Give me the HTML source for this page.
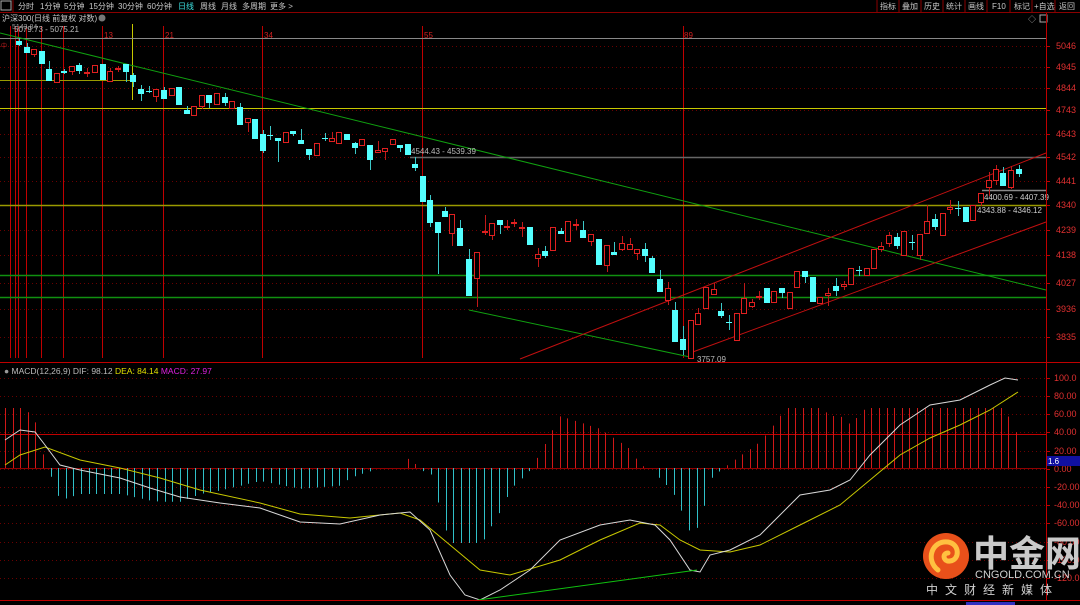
<!DOCTYPE html>
<html><head><meta charset="utf-8">
<style>
html,body{margin:0;padding:0;background:#000;width:1080px;height:605px;overflow:hidden}
svg{display:block}
text{font-family:"Liberation Sans","Noto Sans CJK SC",sans-serif}
</style></head>
<body>
<svg id="s" width="1080" height="605" xmlns="http://www.w3.org/2000/svg">
<rect width="1080" height="605" fill="#000"/>
<!-- toolbar -->
<g font-size="8" fill="#c8c8c8">
<rect x="1" y="1" width="10" height="9" fill="none" stroke="#aaa" stroke-width="1"/>
<line x1="13" y1="0" x2="13" y2="12" stroke="#8b0000"/>
<text x="18" y="9">分时</text><text x="40" y="9">1分钟</text><text x="64" y="9">5分钟</text>
<text x="89" y="9">15分钟</text><text x="118" y="9">30分钟</text><text x="147" y="9">60分钟</text>
<text x="178" y="9" fill="#3ce0e0">日线</text><text x="200" y="9">周线</text><text x="221" y="9">月线</text>
<text x="242" y="9">多周期</text><text x="270" y="9">更多 &gt;</text>
<text x="880" y="9">指标</text><text x="902" y="9">叠加</text><text x="924" y="9">历史</text>
<text x="946" y="9">统计</text><text x="968" y="9">画线</text><text x="992" y="9">F10</text>
<text x="1014" y="9">标记</text><text x="1034" y="9">+自选</text><text x="1059" y="9">返回</text>
</g>
<g stroke="#8b0000" stroke-width="1">
<line x1="0" y1="12.5" x2="1080" y2="12.5"/>
<line x1="877" y1="0" x2="877" y2="12"/><line x1="899" y1="0" x2="899" y2="12"/><line x1="921" y1="0" x2="921" y2="12"/>
<line x1="943" y1="0" x2="943" y2="12"/><line x1="965" y1="0" x2="965" y2="12"/><line x1="987" y1="0" x2="987" y2="12"/>
<line x1="1010" y1="0" x2="1010" y2="12"/><line x1="1032" y1="0" x2="1032" y2="12"/><line x1="1055" y1="0" x2="1055" y2="12"/>
</g>
<text x="2" y="21" font-size="8" fill="#c8c8c8">沪深300(日线 前复权 对数)</text>
<circle cx="102" cy="18" r="3.5" fill="#777"/>
<text x="1028" y="22" font-size="8" fill="#aaa">◇</text>
<rect x="1040" y="15" width="7" height="7" fill="none" stroke="#aaa"/>
<g id="grid"></g>
<g id="lines"></g>
<g id="cand"></g>
<g id="macd"></g>
<!-- right axis -->
<line x1="1046.5" y1="13" x2="1046.5" y2="601" stroke="#c00000"/>
<line x1="0" y1="362.5" x2="1080" y2="362.5" stroke="#c00000"/>
<line x1="0" y1="600.5" x2="1080" y2="600.5" stroke="#c00000"/>
<g font-size="9" fill="#e03030" id="axis"></g>
<text x="4" y="374" font-size="8.5" fill="#bbb"><tspan fill="#999">●</tspan> MACD(12,26,9)  DIF: 98.12 <tspan fill="#e0e000">DEA: 84.14</tspan> <tspan fill="#e020e0">MACD: 27.97</tspan></text>
<rect x="1047" y="456" width="33" height="10" fill="#1010a0"/>
<text x="1048" y="464" font-size="8" fill="#fff">1.6</text>
<rect x="966" y="602" width="49" height="3" fill="#3030c0"/>
<!-- logo -->
<circle cx="946" cy="556" r="23" fill="#e8501a"/>
<path d="M938 570 C925 560 932 540 948 542 C960 544 960 560 950 561 C943 562 942 553 948 553" fill="none" stroke="#ffc040" stroke-width="5" stroke-linecap="round"/>
<text x="973" y="566" font-size="36" font-weight="bold" fill="#c9c9c9" font-family="'Noto Sans CJK SC',sans-serif">中金网</text>
<text x="975" y="578" font-size="11" fill="#d0d0d0">CNGOLD.COM.CN</text>
<text x="926" y="594" font-size="12" fill="#d0d0d0" letter-spacing="7" font-family="'Noto Sans CJK SC',sans-serif">中文财经新媒体</text>
</svg>
<script>
var NS="http://www.w3.org/2000/svg";
function el(p,t,a){var e=document.createElementNS(NS,t);for(var k in a)e.setAttribute(k,a[k]);document.getElementById(p).appendChild(e);return e;}
function ln(p,x1,y1,x2,y2,c,extra){var a={x1:x1,y1:y1,x2:x2,y2:y2,stroke:c,"stroke-width":1};for(var k in extra)a[k]=extra[k];return el(p,"line",a);}
function tx(p,x,y,s,c,fs){var e=el(p,"text",{x:x,y:y,fill:c,"font-size":fs||9});e.textContent=s;}
var py=[[46,"5046"],[67,"4945"],[88,"4844"],[110,"4743"],[134,"4643"],[157,"4542"],[181,"4441"],[205,"4340"],[230,"4239"],[255,"4138"],[283,"4027"],[309,"3936"],[337,"3835"]];
py.forEach(function(p){ln("grid",0,p[0]+.5,1046,p[0]+.5,"#6a0000",{"stroke-dasharray":"1,3"});ln("grid",1046,p[0]+.5,1050,p[0]+.5,"#c00000");tx("axis",1056,p[0]+3,p[1],"#e03030");});
var my=[[378,"100.0"],[396,"80.00"],[414,"60.00"],[432,"40.00"],[451,"20.00"],[469,"0.00"],[487,"-20.00"],[505,"-40.00"],[523,"-60.00"],[542,"-80.00"],[560,"-100.0"],[578,"-120.0"]];
my.forEach(function(p){ln("grid",0,p[0]+.5,1046,p[0]+.5,"#6a0000",{"stroke-dasharray":"1,3"});ln("grid",1046,p[0]+.5,1050,p[0]+.5,"#c00000");tx("axis",1054,p[0]+3,p[1],"#e03030");});
ln("grid",0,434.5,1046,434.5,"#c00000");ln("grid",0,468.5,1046,468.5,"#900000");
[10,15,18,26,41,63,102,163,262,422,683].forEach(function(x){ln("lines",x+.5,26,x+.5,358,"#c00000");});
ln("lines",132.5,24,132.5,100,"#c8c800");
[["13",104],["21",165],["34",264],["55",424],["89",684]].forEach(function(a){tx("lines",a[1],38,a[0],"#d02020",8);});
ln("lines",0,38.5,1046,38.5,"#888");
ln("lines",0,80.5,135,80.5,"#9a9a00");
ln("lines",0,108.5,1046,108.5,"#c8c800");
ln("lines",0,205.5,1046,205.5,"#9a9a00",{"stroke-width":1.5});
ln("lines",0,275.5,1046,275.5,"#109010",{"stroke-width":1.5});
ln("lines",0,297.5,1046,297.5,"#109010",{"stroke-width":1.5});
ln("lines",410,157.5,1046,157.5,"#666",{"stroke-width":1.5});
ln("lines",982,190.5,1046,190.5,"#888",{"stroke-width":1.5});
ln("lines",0,33,1046,290,"#10a010");
ln("lines",469,310,690,357,"#10a010");
ln("lines",520,359,1046,153,"#c01010");
ln("lines",690,353,1046,222,"#c01010");
tx("lines",14,32,"5079.73 - 5075.21","#bbb",8);
tx("lines",12,29,"5143.84","#999",7);
tx("lines",411,154,"4544.43 - 4539.39","#bbb",8);
tx("lines",984,200,"4400.69 - 4407.39","#ccc",8);
tx("lines",977,213,"4343.88 - 4346.12","#ccc",8);
tx("lines",697,362,"3757.09","#bbb",8);
tx("lines",1,48,"中","#c02020",6);
var C=[[19,41,45,38,46,0],[27,47,53,43,53,0],[34,49,54,49,57,1],[42,51,64,51,64,0],[49,69,81,61,81,0],[57,73,82,73,82,1],[64,71,73,69,74,0],[72,66,71,66,75,1],[79,65,71,63,74,0],[87,72,72,68,77,1],[95,65,72,65,72,1],[103,64,80,64,80,0],[110,71,81,68,81,1],[118,68,68,66,72,1],[126,64,72,64,82,0],[133,75,82,73,87,0],[141,89,94,85,101,0],[149,91,92,86,93,0],[156,89,96,89,102,1],[164,90,99,87,99,0],[172,88,95,88,95,1],[179,87,105,87,105,0],[187,110,114,106,114,0],[194,106,115,106,115,1],[202,95,106,95,109,1],[209,95,103,95,108,0],[217,93,104,93,104,1],[225,97,103,93,106,0],[232,101,108,101,108,1],[240,107,125,103,125,0],[248,118,122,118,132,1],[255,119,139,119,139,0],[263,134,151,130,153,0],[270,135,136,126,140,0],[278,138,141,138,162,0],[286,132,142,132,142,1],[293,131,134,131,136,0],[301,140,144,129,144,0],[309,149,155,149,160,0],[317,143,155,143,155,1],[325,138,139,133,141,0],[332,138,141,132,141,1],[339,132,143,132,143,1],[347,134,140,134,140,0],[355,143,148,142,154,0],[362,139,145,139,145,1],[370,145,160,145,170,0],[378,150,152,141,152,1],[385,148,151,148,160,1],[393,139,144,139,144,1],[400,145,148,145,152,0],[408,144,155,144,155,0],[415,164,168,157,171,0],[423,176,202,176,202,0],[430,200,223,195,227,0],[438,222,233,222,274,0],[445,211,217,207,217,0],[452,214,233,214,246,1],[460,228,246,220,246,0],[469,259,296,249,296,0],[477,252,278,252,307,1],[485,231,231,215,235,1],[492,223,235,223,240,1],[500,220,225,220,234,0],[507,226,226,220,230,1],[514,222,222,219,227,1],[522,227,227,222,237,1],[530,227,245,227,245,0],[538,254,258,248,267,1],[545,251,256,246,258,0],[553,227,250,227,250,1],[561,231,234,228,234,0],[568,221,241,221,241,1],[576,224,225,219,230,1],[583,230,238,221,238,0],[591,234,241,234,246,1],[599,239,265,239,265,0],[607,245,265,245,272,1],[614,252,255,242,255,0],[622,243,249,236,251,1],[630,244,249,238,249,1],[637,249,253,249,260,1],[645,249,256,243,262,0],[652,258,273,256,273,0],[660,279,292,270,292,0],[668,288,300,282,305,1],[675,310,342,302,342,0],[683,339,350,326,355,0],[691,320,358,320,358,1],[698,313,324,308,325,1],[706,287,308,287,308,1],[714,289,294,283,294,1],[721,311,316,303,318,0],[729,322,323,315,330,0],[737,313,340,313,340,1],[744,298,313,283,313,1],[752,302,306,299,308,1],[759,296,297,291,300,1],[767,288,303,288,303,0],[774,291,302,291,302,1],[782,288,293,288,298,0],[790,292,308,292,308,1],[797,271,287,271,287,1],[805,271,277,271,283,0],[813,277,302,277,302,0],[820,297,303,297,303,1],[828,293,295,288,306,1],[836,286,291,278,296,0],[844,284,286,281,290,1],[851,268,284,268,284,1],[859,270,270,266,276,0],[867,268,275,268,275,1],[874,249,268,249,268,1],[881,246,249,242,252,1],[889,235,243,232,247,1],[897,237,246,233,249,0],[904,231,255,231,255,1],[912,242,242,235,250,0],[920,234,255,234,260,1],[927,221,233,205,233,1],[935,219,227,214,230,0],[943,213,235,213,235,1],[950,207,209,200,214,1],[958,208,208,201,216,0],[966,207,222,207,222,0],[973,205,220,205,220,1],[981,193,202,193,206,1],[989,180,187,172,196,1],[996,169,180,165,185,1],[1003,173,186,167,186,0],[1011,170,187,166,189,1],[1019,169,174,165,177,0]];
C.forEach(function(c){var col=c[5]?"#e02020":"#54ffff";var x=c[0];
 ln("cand",x+.5,c[3],x+.5,c[4],c[5]?"#c01818":"#3cc8c8");
 var h=Math.max(c[2]-c[1],1);
 if(c[5]) el("cand","rect",{x:x-2.5,y:c[1]+.5,width:5,height:h,fill:"#000",stroke:col,"stroke-width":1});
 else el("cand","rect",{x:x-3,y:c[1],width:6,height:h,fill:col});
});
var DIF=[[5,440],[20,430],[35,432],[45,445],[60,465],[80,470],[120,478],[150,488],[180,497],[220,503],[260,508],[300,522],[340,524],[380,515],[410,512],[430,530],[450,575],[465,595],[480,600],[500,590],[530,570],[560,540],[600,525],[630,520],[655,525],[670,540],[690,570],[700,572],[710,555],[730,550],[760,535],[800,495],[830,490],[850,480],[870,455],[900,425],[930,405],[960,400],[990,385],[1005,378],[1018,380]];
var DEA=[[5,465],[20,455],[45,447],[80,460],[120,468],[160,478],[200,490],[260,503],[300,514],[350,518],[400,513],[420,520],[450,545],[480,570],[510,575],[560,560],[600,540],[640,523],[660,525],[680,540],[700,550],[730,552],[760,545],[800,525],[840,505],[870,480],[900,455],[930,438],[960,425],[990,410],[1018,392]];
function interp(a,x){if(x<=a[0][0])return a[0][1];for(var i=1;i<a.length;i++){if(x<=a[i][0]){var t=(x-a[i-1][0])/(a[i][0]-a[i-1][0]);return a[i-1][1]+t*(a[i][1]-a[i-1][1]);}}return a[a.length-1][1];}
for(var x=5;x<=1020;x+=7.6){var v=2.6*(interp(DEA,x)-interp(DIF,x));v=Math.max(-75,Math.min(60,v));var xx=Math.round(x)+.5;
 if(Math.abs(v)<1)continue; ln("macd",xx,468,xx,468-v,v>0?"#d01818":"#30c0c8");}
el("macd","polyline",{points:DEA.map(function(p){return p.join(",")}).join(" "),fill:"none",stroke:"#c8c800","stroke-width":1});
el("macd","polyline",{points:DIF.map(function(p){return p.join(",")}).join(" "),fill:"none",stroke:"#d8d8d8","stroke-width":1});
ln("macd",478,600,697,570,"#10c010");
</script>
</body></html>
